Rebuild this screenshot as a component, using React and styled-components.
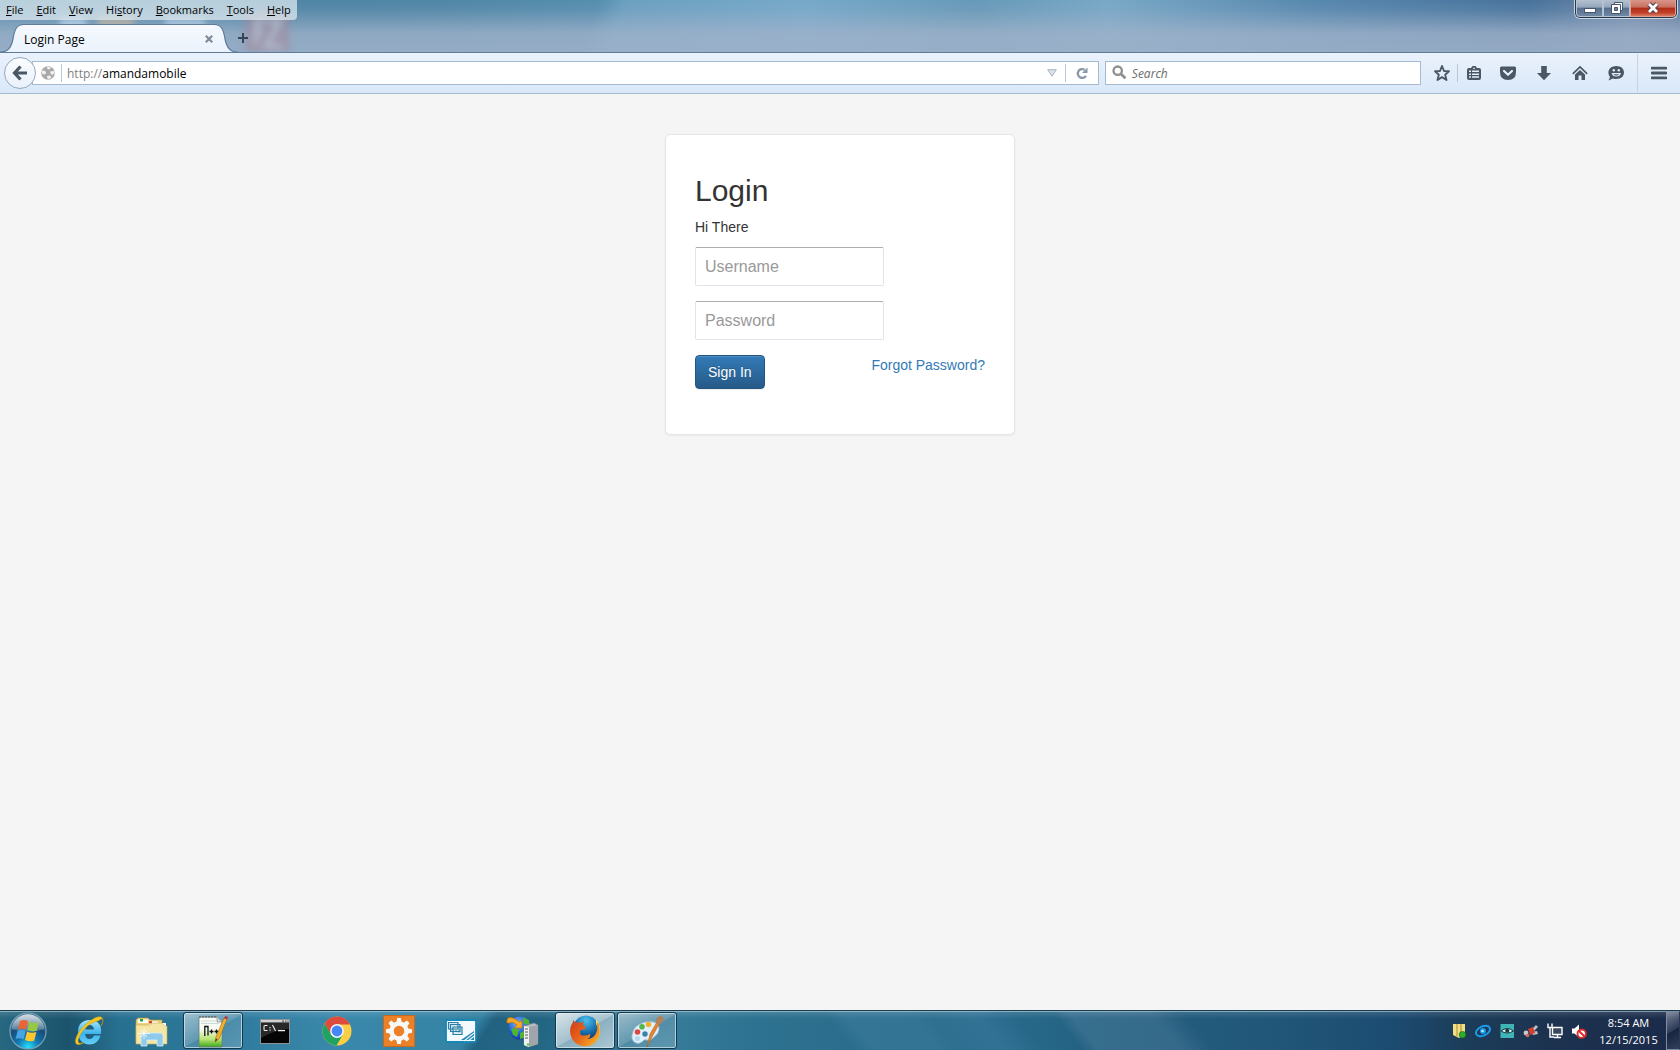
import React from "react";
import styled, { createGlobalStyle } from "styled-components";

const UI_FONT = `"Segoe UI", "Open Sans", "Noto Sans", sans-serif`;
const PAGE_FONT = `"Liberation Sans", Arial, sans-serif`;

const GlobalStyle = createGlobalStyle`
  *, *::before, *::after { box-sizing: border-box; }
  body { margin: 0; }
  button, input { font: inherit; color: inherit; margin: 0; }
  button { padding: 0; border: 0; background: none; cursor: pointer; }
  svg { display: block; flex: none; }
`;

const Desktop = styled.div`
  display: flex;
  flex-direction: column;
  min-height: 100vh;
  font-family: ${UI_FONT};
  font-size: 12px;
  line-height: 16px;
  color: #000;
`;

/* ---------- window frame ---------- */

const Frame = styled.header`
  position: relative;
  display: flex;
  flex-direction: column;
  gap: 4px;
  height: 53px;
  overflow: hidden;
  border-bottom: 1px solid #5d7d9b;
  background:
    linear-gradient(180deg, rgba(160, 178, 202, 0) 0%, rgba(160, 178, 202, 0.15) 20%, rgba(160, 178, 202, 0.8) 65%, rgba(160, 178, 202, 0.85) 100%),
    linear-gradient(108deg, rgba(60, 120, 155, 0.45) 0 570px, rgba(60, 120, 155, 0) 596px),
    linear-gradient(90deg, #6f9db8 0%, #5c8eac 17%, #5e91ae 26%, #6a9fbf 36%, #76a9c9 48%, #6699b8 58%, #78a8c6 66%, #5788ae 78%, #47729b 91%, #7088a8 97%, #5f7a9e 100%);
`;

const GlassGhost = styled.svg`
  position: absolute;
  left: 60px;
  top: 4px;
  filter: blur(3px);
`;

const FrameTop = styled.div`
  position: relative;
  display: flex;
  justify-content: space-between;
  align-items: flex-start;
`;

const MenuBar = styled.nav`
  display: flex;
  gap: 1px;
  height: 20px;
  border-radius: 0 0 4px 0;
  background: rgba(232, 240, 245, 0.68);
  font-size: 11px;
`;

const MenuItem = styled.button`
  padding: 0 6px;
  line-height: 20px;
`;

const Caption = styled.div`
  display: flex;
  height: 19px;
  margin-right: 2px;
  border: 1px solid #c9d5e1;
  border-top: 0;
  border-radius: 0 0 6px 6px;
  background: #26364c;
  padding: 0 1px 1px;
`;

const CaptionButton = styled.button`
  display: flex;
  align-items: center;
  justify-content: center;
  width: ${(p) => (p.$close ? 46 : 27)}px;
  border: 1px solid ${(p) => (p.$close ? "#e0a090" : "#b4c2d2")};
  border-top: 0;
  border-radius: ${(p) => (p.$close ? "0 0 4px 0" : p.$first ? "0 0 0 4px" : "0")};
  background: ${(p) =>
    p.$close
      ? "linear-gradient(#d8968a 0%, #c9705f 45%, #b02c14 50%, #c2402a 80%, #d87a62 100%)"
      : "linear-gradient(#b4c1d1 0%, #95a7bc 45%, #566f8d 50%, #6f87a3 100%)"};
`;

const TabStrip = styled.div`
  position: relative;
  display: flex;
  height: 29px;
`;

const Tab = styled.div`
  display: flex;
  width: 238px;
`;

const TabBody = styled.div`
  display: flex;
  flex: 1;
  align-items: center;
  justify-content: space-between;
  min-width: 0;
  border-top: 1px solid #5d7d9b;
  background: linear-gradient(#f6f9fe, #eaf2fc);
`;

const TabButton = styled.button`
  flex: 1;
  height: 24px;
  padding-top: 2px;
  text-align: left;
`;

const IconButton = styled.button`
  display: flex;
  align-items: center;
  justify-content: center;
  width: ${(p) => p.$w || 36}px;
  height: ${(p) => p.$h || 24}px;
`;

/* ---------- navigation bar ---------- */

const NavBar = styled.div`
  display: flex;
  align-items: center;
  height: 41px;
  padding: 0 0 1px 4px;
  border-bottom: 1px solid #a5b9cf;
  background: linear-gradient(#eaf2fc, #dae8f8);
`;

const BackButton = styled.button`
  position: relative;
  display: flex;
  align-items: center;
  justify-content: center;
  width: 32px;
  height: 32px;
  border: 1px solid #93a9c0;
  border-radius: 50%;
  background: linear-gradient(#fbfdff, #e9f1fb);
`;

const Field = styled.div`
  display: flex;
  align-items: center;
  min-width: 0;
  height: 24px;
  border: 1px solid #a5b9cf;
  background: #fff;
`;

const UrlField = styled(Field)`
  flex: 1070;
  margin-left: -4px;
  padding-left: 8px;
`;

const SearchField = styled(Field)`
  flex: 312;
  margin: 0 6px;
  padding-left: 6px;
  gap: 5px;
`;

const FieldInput = styled.input`
  flex: 1;
  min-width: 0;
  height: 20px;
  padding: 2px 0 0;
  border: 0;
  outline: 0;
  background: none;
  &::placeholder { color: #6b6b6b; font-style: italic; opacity: 1; }
`;

const Scheme = styled.label`
  padding-top: 2px;
  color: #808080;
`;

const Rule = styled.span`
  width: 1px;
  height: ${(p) => p.$h || 18}px;
  margin: ${(p) => p.$m || "0"};
  background: ${(p) => (p.$h ? "#c6d3e2" : "#b9c6d6")};
`;

/* ---------- page ---------- */

const Page = styled.main`
  flex: 1;
  padding: 40px 16px;
  background: #f5f5f5;
  font-family: ${PAGE_FONT};
  font-size: 14px;
  line-height: 20px;
  color: #333;
`;

const LoginCard = styled.form`
  max-width: 350px;
  margin: 0 auto;
  padding: 39px 29px 45px;
  border: 1px solid #e5e5e5;
  border-radius: 5px;
  background: #fff;
  box-shadow: 0 1px 2px rgba(0, 0, 0, 0.05);
`;

const Heading = styled.h2`
  margin: 0 0 10px;
  font-size: 30px;
  line-height: 33px;
  font-weight: 400;
`;

const Greeting = styled.p`
  margin: 0 0 10px;
`;

const TextBox = styled.input`
  display: block;
  width: 189px;
  height: 39px;
  margin-bottom: 15px;
  padding: 7px 9px;
  border: 1px solid #e2e3ea;
  border-top-color: #abadb3;
  border-radius: 2px;
  background: #fff;
  font-size: 16px;
  &::placeholder { color: #999; opacity: 1; }
`;

const Actions = styled.div`
  display: flex;
  align-items: flex-start;
  justify-content: space-between;
`;

const SignIn = styled.button`
  height: 34px;
  padding: 0 12px;
  border: 1px solid #245580;
  border-radius: 4px;
  background: linear-gradient(#337ab7, #265a88);
  box-shadow: inset 0 1px 0 rgba(255, 255, 255, 0.15), 0 1px 1px rgba(0, 0, 0, 0.075);
  color: #fff;
  text-shadow: 0 -1px 0 rgba(0, 0, 0, 0.2);
`;

const Forgot = styled.a`
  color: #337ab7;
  text-decoration: none;
`;

/* ---------- taskbar ---------- */

const Taskbar = styled.footer`
  display: flex;
  align-items: stretch;
  height: 40px;
  border-top: 1px solid #1d3a4a;
  box-shadow: inset 0 1px 0 rgba(190, 220, 235, 0.55);
  background:
    linear-gradient(180deg, rgba(255, 255, 255, 0.14), rgba(255, 255, 255, 0) 20%),
    linear-gradient(50deg, transparent 0 655px, rgba(90, 150, 190, 0.2) 670px 720px, rgba(90, 150, 190, 0.12) 735px, rgba(90, 150, 190, 0.2) 770px, transparent 800px 830px, rgba(110, 150, 180, 0.24) 842px 905px, transparent 930px),
    linear-gradient(125deg, transparent 0 398px, rgba(20, 75, 105, 0.55) 410px, transparent 560px),
    linear-gradient(90deg, #276880 0%, #1b536c 4%, #27708f 7%, #2f7b9d 14%, #3a88ab 20%, #3583a5 27%, #2c7795 32%, #377e9b 39%, #2d7290 45%, #2a6c8b 52%, #27698a 60%, #235d7e 68%, #215879 75%, #1c4b71 83%, #1c3d5a 87%, #1c3350 92%, #1b2a4a 100%);
`;

const StartButton = styled(IconButton)`
  width: 55px;
  height: auto;
  margin-right: 4px;
`;

const Apps = styled.div`
  display: flex;
  flex: 1;
  gap: 2px;
  padding: 1px 0;
`;

const AppButton = styled.button`
  display: flex;
  align-items: center;
  justify-content: center;
  width: 60px;
  border: 1px solid ${(p) => (p.$state ? "#17384a" : "transparent")};
  border-radius: 3px;
  box-shadow: ${(p) => (p.$state ? "inset 0 0 0 1px rgba(225, 240, 248, 0.65)" : "none")};
  background: ${(p) =>
    p.$state === "active"
      ? "linear-gradient(150deg, rgba(255,255,255,.82) 0%, rgba(255,255,255,.58) 50%, rgba(255,255,255,.45) 51%, rgba(255,255,255,.6) 100%)"
      : p.$state === "open"
      ? "linear-gradient(150deg, rgba(255,255,255,.52) 0%, rgba(255,255,255,.25) 50%, rgba(255,255,255,.14) 51%, rgba(255,255,255,.2) 100%)"
      : "none"};
`;

const Tray = styled.div`
  display: flex;
  align-items: center;
`;

const Clock = styled.time`
  display: flex;
  flex-direction: column;
  align-items: center;
  width: 75px;
  font-size: 11px;
  line-height: 17px;
  color: #fff;
`;

const ShowDesktop = styled.button`
  width: 14px;
  border: 1px solid #7c8ca3;
  border-right-color: #2a3850;
  background: linear-gradient(150deg, rgba(255, 255, 255, 0.4), rgba(255, 255, 255, 0.08) 50%, rgba(0, 0, 0, 0.15) 52%, rgba(255, 255, 255, 0.1));
`;

/* ---------- drawings ---------- */

const Svg = ({ s = 16, w, h, v, children, ...rest }) => (
  <svg width={w || s} height={h || s} viewBox={v || `0 0 ${w || s} ${h || s}`} aria-hidden="true" {...rest}>
    {children}
  </svg>
);

const TabEdge = ({ flip }) => (
  <Svg w={24} h={29}>
    <defs>
      <linearGradient id="tabFill" x1="0" y1="0" x2="0" y2="1">
        <stop offset="0" stopColor="#f6f9fe" />
        <stop offset="1" stopColor="#eaf2fc" />
      </linearGradient>
    </defs>
    <g transform={flip ? "translate(24 0) scale(-1 1)" : undefined}>
      <path d="M0 29V28C8 28 11 24 13 15C14.500 5 17 .5 24 .5V29Z" fill="url(#tabFill)" />
      <path d="M0 28C8 28 11 24 13 15C14.500 5 17 .5 24 .5" fill="none" stroke="#5d7d9b" strokeWidth="1.2" />
    </g>
  </Svg>
);

const DARK = "#4a5866";

const Ghost = () => (
  <GlassGhost width="240" height="50" viewBox="0 0 240 50" aria-hidden="true">
    <rect x="-36" y="12" width="26" height="26" fill="#c2d5e4" opacity=".6" />
    <rect x="-4" y="14" width="30" height="26" fill="#c2d9ee" opacity=".7" />
    <rect x="38" y="12" width="36" height="26" fill="#cbb89c" opacity=".6" />
    <rect x="105" y="14" width="40" height="26" fill="#c2d9ee" opacity=".6" />
    <rect x="185" y="8" width="44" height="40" rx="3" fill="#a58598" opacity=".5" />
    <path d="M196 40V18H206M196 28H204M208 18H220L206 42H222" fill="none" stroke="#b4bdce" strokeWidth="5" opacity=".8" />
  </GlassGhost>
);

const BackIcon = () => (
  <Svg s={16}>
    <path d="M8.5 1.5L2.5 8L8.5 14.5M3 8H15" fill="none" stroke={DARK} strokeWidth="3.2" />
  </Svg>
);

const GlobeIcon = () => (
  <Svg s={14}>
    <circle cx="7" cy="7" r="6.8" fill="#a9a9a9" />
    <path d="M6 .8L10 1.400L9 3L7.600 3.600L6.400 3ZM.8 5L3.200 4.600L5 6L4.600 8L3 8.600L1.400 8ZM9 5.400L12.800 5L13.400 7L11.600 9L10 8ZM6 10L9 9.600L10.400 11.400L8 13L6.400 12.400Z" fill="#fff" opacity=".85" />
  </Svg>
);

const StarIcon = () => (
  <Svg s={18}>
    <path d="M9 2L11 7L16 7.3L12.2 10.7L13.5 16L9 13.1L4.5 16L5.8 10.7L2 7.3L7 7Z" fill="none" stroke={DARK} strokeWidth="1.9" strokeLinejoin="round" />
  </Svg>
);

const ListIcon = () => (
  <Svg w={16} h={16}>
    <path d="M1 5Q1 3 3 3H5L6.500 1H9.500L11 3H13Q15 3 15 5V13Q15 15 13 15H3Q1 15 1 13Z" fill={DARK} />
    <path d="M3 5.500H5V7H3ZM6 5.500H13V7H6ZM3 8.400H5V9.900H3ZM6 8.400H13V9.900H6ZM3 11.300H5V12.800H3ZM6 11.300H13V12.800H6Z" fill="#e4eefa" />
    <path d="M7 3.300H9" stroke="#e4eefa" />
  </Svg>
);

const PocketIcon = () => (
  <Svg w={18} h={16}>
    <path d="M1 3Q1 1.5 2.5 1.5H15.5Q17 1.5 17 3V7Q17 15 9 15Q1 15 1 7Z" fill={DARK} />
    <path d="M5 6L9 9.8L13 6" fill="none" stroke="#e8f1fb" strokeWidth="2.2" strokeLinecap="round" strokeLinejoin="round" />
  </Svg>
);

const DownIcon = () => (
  <Svg s={16}>
    <path d="M5.2 1H10.8V8H15L8 15.2L1 8H5.2Z" fill={DARK} />
  </Svg>
);

const HomeIcon = () => (
  <Svg s={16}>
    <path d="M.8 8.8L8 2L15.2 8.8" fill="none" stroke={DARK} strokeWidth="1.7" />
    <path d="M3 9.500L8 5L13 9.500V15H9.5V10.5H6.5V15H3Z" fill={DARK} />
  </Svg>
);

const ChatIcon = () => (
  <Svg w={18} h={16}>
    <path d="M9.3 1C14 1 17 3.8 17 7.5S14 14 9.3 14C8 14 7 13.8 6 13.4L1.5 15.4L3 12C2 10.8 1.4 9.4 1.4 7.5C1.4 3.8 4.8 1 9.3 1Z" fill={DARK} />
    <circle cx="6.8" cy="5.2" r="1.2" fill="#e3edf9" />
    <circle cx="11.8" cy="5.2" r="1.2" fill="#e3edf9" />
    <path d="M4.600 8H14Q13.200 11.600 9.3 11.600Q5.400 11.600 4.600 8Z" fill="#e3edf9" />
    <path d="M6.500 9.200H12Q11.500 10.400 9.300 10.400Q7.200 10.400 6.500 9.200Z" fill={DARK} />
  </Svg>
);

const MenuIcon = () => (
  <Svg w={16} h={16}>
    <path d="M1 3.2H15M1 8H15M1 12.8H15" stroke={DARK} strokeWidth="2.8" strokeLinecap="round" />
  </Svg>
);

const ReloadIcon = () => (
  <Svg s={14}>
    <path d="M11 9.800A4.400 4.400 0 1 1 9.600 3.800" fill="none" stroke="#8a99a8" strokeWidth="2.3" />
    <path d="M12.500 1.500V7H7Z" fill="#8a99a8" />
  </Svg>
);

const SearchIcon = () => (
  <Svg s={15}>
    <circle cx="5.7" cy="5.7" r="4.2" fill="none" stroke="#8f8f8f" strokeWidth="2.3" />
    <path d="M9 9L13.4 13.2" stroke="#8f8f8f" strokeWidth="2.8" />
  </Svg>
);

const StartOrb = () => (
  <Svg s={38}>
    <defs>
      <radialGradient id="orb" cx=".5" cy=".95" r=".85">
        <stop offset="0" stopColor="#27e0fb" />
        <stop offset=".35" stopColor="#1179b3" />
        <stop offset=".7" stopColor="#174d79" />
        <stop offset="1" stopColor="#4c7592" />
      </radialGradient>
      <linearGradient id="orbShine" x1="0" y1="0" x2="0" y2="1">
        <stop offset="0" stopColor="#fff" stopOpacity=".75" />
        <stop offset="1" stopColor="#fff" stopOpacity=".2" />
      </linearGradient>
    </defs>
    <circle cx="19" cy="19" r="18" fill="url(#orb)" stroke="#7ba3b8" strokeWidth="1.2" />
    <path d="M2.5 17A16.6 16.6 0 0 1 35.5 17Q19 22 2.5 17Z" fill="url(#orbShine)" />
    <path d="M11 9Q15 6.8 19 9L17 17.5Q13 15.5 9 17.3Z" fill="#ec6434" />
    <path d="M20.3 9.6Q25 12 30 10L27.8 18.7Q23 20.4 18.3 18Z" fill="#95c847" />
    <path d="M8.6 18.7Q12.5 17 16.6 19L14.6 27.3Q10.6 25.2 6.6 27Z" fill="#48a4e2" />
    <path d="M18 19.6Q22.8 21.8 27.4 20L25.3 28.4Q21 30.4 16 28Z" fill="#fbc72f" />
  </Svg>
);

const IeIcon = () => (
  <Svg s={32}>
    <defs>
      <linearGradient id="ie" x1="0" y1="0" x2="0" y2="1">
        <stop offset="0" stopColor="#a6e6fd" />
        <stop offset=".55" stopColor="#3fb2ec" />
        <stop offset="1" stopColor="#65d0f8" />
      </linearGradient>
    </defs>
    <path d="M27.500 20.500H21Q19.500 24 16.500 24Q12.500 24 12.200 19H28Q29.500 5 16.500 5Q5 5.500 5 17Q5.500 29 16.500 29.500Q25 29.500 27.500 20.500ZM12.300 14.500Q12.800 10 16.600 10Q20.500 10 21 14.500Z" fill="url(#ie)" fillRule="evenodd" />
    <path d="M25 6C31 1 31 6 28 11C33 3 28 -1 20 4C11 9 4 18 2.500 25C1.800 30 5.500 31 11 27.500C4 30 4 26 7 20C11 13 18 7 25 6Z" fill="#f6c824" stroke="#c89912" strokeWidth=".5" />
  </Svg>
);

const ExplorerIcon = () => (
  <Svg w={34} h={32}>
    <path d="M2 5L4 3H14L16 5H28V27H2Z" fill="#ecd27c" stroke="#bb9b48" strokeWidth=".6" />
    <path d="M4 4.5H14V8H4ZM15 6.5H24V10H15ZM23 8H32V12H23Z" fill="#fff" />
    <path d="M6 4H9V6.5H6Z" fill="#22a54a" /><path d="M15 6H18V8.5H15Z" fill="#d24829" /><path d="M23 8H26V10.5H23Z" fill="#2597df" />
    <path d="M2 10H16L19 8H28L31 11H33V29H2Z" fill="#f5e6a5" stroke="#c9ac5b" strokeWidth=".6" />
    <path d="M7 31V21Q7 18 10 18H26Q29 18 29 21V31H23V25H13V31Z" fill="#8ecbea" stroke="#d4effb" strokeWidth=".8" />
    <path d="M10 13V24M4 18.5H16M7 15L13 22M13 15L7 22" stroke="#fff" strokeWidth=".8" />
  </Svg>
);

const NotepadIcon = () => (
  <Svg w={34} h={34}>
    <defs><linearGradient id="npp" x1="0" y1="0" x2="0" y2="1"><stop offset=".4" stopColor="#f7fbf4" /><stop offset=".75" stopColor="#b6e36e" /><stop offset="1" stopColor="#39a81c" /></linearGradient></defs>
    <path d="M3 3H21L26 8V33H3Z" fill="url(#npp)" stroke="#707a80" strokeWidth=".8" />
    <path d="M21 3V8H26" fill="#d5d9dc" stroke="#707a80" strokeWidth=".6" />
    <path d="M4 2V4M7 2V4M10 2V4M13 2V4M16 2V4M19 2V4" stroke="#555" />
    <path d="M5 7H20M5 9.500H23" stroke="#bcc8ce" strokeWidth=".7" />
    <path d="M8.800 22V12.500H12V21.500M13.500 17.500H17.500M15.500 15.500V19.500M18.500 17.500H22.500M20.500 15.500V19.500" stroke="#111" strokeWidth="1.300" fill="none" />
    <path d="M19 28L20 23L28 4L31 5L23 25Z" fill="#f3b32b" stroke="#95651b" strokeWidth=".6" />
    <path d="M28 4L29 2.5Q31 1.5 32 3.5L31 5.5Z" fill="#b3374a" /><path d="M19 28L20 24.5L21.5 25.5Z" fill="#333" />
  </Svg>
);

const CmdIcon = () => (
  <Svg w={30} h={26}>
    <rect x=".5" y="1.5" width="29" height="24" fill="#050505" stroke="#8d9498" />
    <path d="M1 2H29V4.5H1Z" fill="#cfd3d6" /><path d="M22 3.2H24M25 3.2H26.5M27.4 3.2H28.5" stroke="#444" />
    <path d="M1 5H29V11Q14 12 1 20Z" fill="#fff" opacity=".14" />
    <path d="M7.5 7.5H5Q4 7.5 4 8.6V11.4Q4 12.5 5 12.5H7.5M10 9V10.2M10 11.6V12.8M12.5 7L15.5 13M18 12.6H25" stroke="#f1f1f1" strokeWidth="1.1" fill="none" />
  </Svg>
);

const ChromeIcon = () => (
  <Svg s={30}>
    <circle cx="15" cy="15" r="14.5" fill="#fbce43" />
    <path d="M15 8.5H28A14.5 14.5 0 0 0 2.5 7.7L9 19Z" fill="#dd4b3e" />
    <path d="M14.5 29.5L21.2 18L19 15L15 20L10 19L9.2 18.6L2.5 7.7A14.5 14.5 0 0 0 14.5 29.5Z" fill="#1ea362" />
    <circle cx="15" cy="15" r="6.9" fill="#f4f6fa" /><circle cx="15" cy="15" r="5.4" fill="#4486f5" />
  </Svg>
);

const GearIcon = () => (
  <Svg s={32}>
    <rect width="32" height="32" fill="#ec8026" /><rect x=".5" y=".5" width="31" height="31" fill="none" stroke="#c56a23" />
    <g fill="#f8f8f8">
      {[0, 45, 90, 135, 180, 225, 270, 315].map((a) => (
        <path key={a} d="M13 9L14.200 3H17.800L19 9Z" transform={`rotate(${a} 16 16)`} />
      ))}
    </g>
    <circle cx="16" cy="16" r="7.500" fill="none" stroke="#f8f8f8" strokeWidth="4.400" />
  </Svg>
);

const RemoteIcon = () => (
  <Svg w={32} h={26}>
    <rect x="1" y="2" width="30" height="22" rx="1.5" fill="#f3f9fc" stroke="#1487b5" strokeWidth="1.8" />
    <path d="M3.500 4.500H13V11H3.500ZM5.500 6.500H15V13.500H5.500ZM8 9H17V16.500H8Z" fill="#dcebf3" stroke="#2a7fa6" strokeWidth="1.200" />
    <path d="M10 13H12M14 11.500V14.500" stroke="#2a7fa6" />
    <path d="M16 22L29 13V22Z" fill="#1e86b4" /><path d="M19 23L29 15M23 23L30 17.500" stroke="#f3f9fc" strokeWidth="1.100" />
  </Svg>
);

const ServerIcon = () => (
  <Svg w={34} h={34}>
    <defs><radialGradient id="earth" cx=".4" cy=".3" r=".8"><stop offset="0" stopColor="#77b8ff" /><stop offset=".6" stopColor="#1f55d0" /><stop offset="1" stopColor="#102c91" /></radialGradient></defs>
    <circle cx="14" cy="14" r="11.500" fill="url(#earth)" />
    <path d="M5 15Q9 13 13 16L11 23L7 21ZM17 3L23 6L24 11L18 10ZM14 19L18 17V24L14 25Z" fill="#4fb52e" />
    <path d="M1 9Q0 2 7 4L14 8L16 6V14H8L11 11Q6 7 4 9Z" fill="#f5a929" stroke="#bd7109" strokeWidth=".7" />
    <path d="M18 12L28 9L32 11V30L22 33L18 31Z" fill="#b9bec2" stroke="#777d83" strokeWidth=".6" />
    <path d="M18 12L23 13V33L18 31Z" fill="#eff1f2" /><path d="M23 13L32 11V30L23 33Z" fill="#9fa5aa" />
    <path d="M19 15H22M19 18H22M19 21H22M19 24H22" stroke="#555" /><circle cx="22" cy="30.500" r="1.200" fill="#53d22a" />
  </Svg>
);

const FirefoxIcon = () => (
  <Svg s={32}>
    <defs><radialGradient id="ffGlobe" cx=".5" cy=".2" r=".8"><stop offset="0" stopColor="#4ac2ee" /><stop offset=".6" stopColor="#176dac" /><stop offset="1" stopColor="#11325f" /></radialGradient>
    <linearGradient id="fox" x1="0" y1="0" x2="1" y2=".7"><stop offset="0" stopColor="#cf3d15" /><stop offset=".5" stopColor="#e8621d" /><stop offset="1" stopColor="#f7a923" /></linearGradient></defs>
    <circle cx="17" cy="13" r="12.500" fill="url(#ffGlobe)" />
    <path d="M27 5C33 11 32 21 26 27C30 19 30 13 27 9Z" fill="#fff05c" />
    <path d="M29.500 9C32 16 31 23 26 27.500C21 32.500 11 32.500 5.500 27C0 21 0 13 3.500 8L4.500 5L6.500 8Q9 6.500 12 8L14.500 5.500L14 10L17 12.500Q16 14.500 12 15Q10 17 12 20Q17 21.500 21 19Q22 22.500 18 24Q25 24 27.500 17Q29 13 27.500 7Z" fill="url(#fox)" />
  </Svg>
);

const PaintIcon = () => (
  <Svg w={34} h={34}>
    <path d="M2 21Q3 11 15 8Q27 6 29 13Q30 19 23 24Q21 27 17 26Q14 25 12 28Q8 31 4 28Q1 25 2 21Z" fill="#e1f0fa" stroke="#88b4cf" strokeWidth=".8" />
    <circle cx="15" cy="20" r="2.700" fill="#3681a7" />
    <circle cx="7.500" cy="18" r="2.800" fill="#db4a40" /><circle cx="12" cy="12.800" r="2.800" fill="#55b44a" /><circle cx="18.500" cy="10.500" r="2.800" fill="#f2b230" /><circle cx="7.500" cy="24.500" r="2.600" fill="#b8d8ee" />
    <path d="M17 33L20 20L27 8L29.500 9.500L22.500 22Z" fill="#e9842d" stroke="#a5581c" strokeWidth=".5" />
    <path d="M26 9Q25 4 30 1.500L34 4Q34 8 29.500 10.500Z" fill="#ae8260" />
  </Svg>
);

const TRAY_ICONS = [
  ["Updates", <g key="a"><path d="M2 1H14V12L8 15L2 12Z" fill="#f2dd83" /><path d="M6 1V13M10 1V13" stroke="#a98b35" /><circle cx="11.500" cy="11.700" r="3.300" fill="#2cad2d" stroke="#0d6714" strokeWidth=".6" /></g>],
  ["Network agent", <g key="b"><ellipse cx="8" cy="8" rx="7.400" ry="4.600" transform="rotate(-25 8 8)" fill="none" stroke="#1a9be8" strokeWidth="2" /><circle cx="8" cy="8" r="3" fill="#1a9be8" /><circle cx="7.500" cy="8" r="1.300" fill="#bcecff" /></g>],
  ["Monitor", <g key="c"><rect x="1.500" y="1" width="13.500" height="14" fill="#3fb4b4" /><path d="M2 8Q8 3 14.500 8Q8 12 2 8Z" fill="#d5eeee" stroke="#173a42" /><circle cx="8.200" cy="7.800" r="2" fill="#173a42" /></g>],
  ["Satellite", <g key="d"><path d="M9 6L13 2L15 4L11 8ZM8 9L14 8L15 11L10 12Z" fill="#b9bfc6" /><path d="M5 6L10 4L12 10L7 12Z" fill="#d63d2f" /><circle cx="3" cy="10" r="2.400" fill="#c4c9cf" /><circle cx="4.500" cy="12.500" r="1.800" fill="#d66a60" /></g>],
  ["Network", <g key="e"><path d="M5.500 4.500H15V11.500H5.500ZM10.500 12V14M7 14.500H14" stroke="#fff" strokeWidth="1.400" fill="#39475c" /><path d="M1 .5V4.500H5V.5M3 4V14H7" stroke="#fff" strokeWidth="1.400" fill="none" /></g>],
  ["Volume muted", <g key="f"><path d="M1 5.500H3.500L8 1.500V14.500L3.500 10.500H1Z" fill="#fff" /><circle cx="10.700" cy="10.700" r="4.200" fill="#fff" stroke="#dc2b28" strokeWidth="1.900" /><path d="M8 8L13.500 13.500" stroke="#dc2b28" strokeWidth="1.900" /></g>],
];

const MENUS = [["", "F", "ile"], ["", "E", "dit"], ["", "V", "iew"], ["Hi", "s", "tory"], ["", "B", "ookmarks"], ["", "T", "ools"], ["", "H", "elp"]];

const APPS = [
  ["Internet Explorer", IeIcon],
  ["Windows Explorer", ExplorerIcon],
  ["Notepad++", NotepadIcon, "open"],
  ["Command Prompt", CmdIcon],
  ["Chrome", ChromeIcon],
  ["Settings", GearIcon],
  ["Remote Desktop", RemoteIcon],
  ["Server Manager", ServerIcon],
  ["Firefox", FirefoxIcon, "active"],
  ["Paint", PaintIcon, "open"],
];

export default function App() {
  return (
    <Desktop>
      <GlobalStyle />
      <Frame>
        <Ghost />
        <FrameTop>
          <MenuBar>
            {MENUS.map(([a, k, b]) => (
              <MenuItem key={k + b}>{a}<u>{k}</u>{b}</MenuItem>
            ))}
          </MenuBar>
          <Caption>
            <CaptionButton $first aria-label="Minimize">
              <Svg w={12} h={14}><rect x=".5" y="7.500" width="11" height="4" fill="#fff" stroke="#46566c" /></Svg>
            </CaptionButton>
            <CaptionButton aria-label="Restore">
              <Svg w={14} h={14}><path d="M4.500 1.500H12.500V9.500H4.500Z" fill="#fff" stroke="#46566c" /><path d="M1.500 3.500H10.500V12.500H1.500Z" fill="#fff" stroke="#46566c" /><path d="M4.500 6.500H7.500V9.500H4.500Z" fill="#7087a3" stroke="#46566c" /></Svg>
            </CaptionButton>
            <CaptionButton $close aria-label="Close window">
              <Svg w={14} h={14}><path d="M3 3L11 11M11 3L3 11" stroke="#5a3f49" strokeWidth="5" /><path d="M3 3L11 11M11 3L3 11" stroke="#fff" strokeWidth="2.800" /></Svg>
            </CaptionButton>
          </Caption>
        </FrameTop>
        <TabStrip>
          <Tab>
            <TabEdge />
            <TabBody>
              <TabButton>Login Page</TabButton>
              <IconButton $w={10} aria-label="Close tab">
                <Svg s={8}><path d="M.8 .8L7.200 7.200M7.200 .8L.8 7.200" stroke="#7f8b98" strokeWidth="2.200" /></Svg>
              </IconButton>
            </TabBody>
            <TabEdge flip />
          </Tab>
          <IconButton $w={10} $h={28} aria-label="New tab">
            <Svg s={10}><path d="M5 0V10M0 5H10" stroke="#34475a" strokeWidth="2" /></Svg>
          </IconButton>
        </TabStrip>
      </Frame>

      <NavBar>
        <BackButton aria-label="Back"><BackIcon /></BackButton>
        <UrlField>
          <GlobeIcon />
          <Rule $m="0 5px 0 6px" />
          <Scheme htmlFor="address">http://</Scheme>
          <FieldInput id="address" defaultValue="amandamobile" />
          <IconButton $w={26} $h={20} aria-label="Show history">
            <Svg w={10} h={8}><path d="M.7 .7H9.300L5 7.200Z" fill="#dde3ec" stroke="#aab2bf" /></Svg>
          </IconButton>
          <Rule />
          <IconButton $w={32} $h={20} aria-label="Reload"><ReloadIcon /></IconButton>
        </UrlField>
        <SearchField>
          <SearchIcon />
          <FieldInput placeholder="Search" aria-label="Search" />
        </SearchField>
        <IconButton $w={30} aria-label="Bookmark this page"><StarIcon /></IconButton>
        <Rule />
        <IconButton $w={32} aria-label="Show bookmarks"><ListIcon /></IconButton>
        <IconButton aria-label="Save to Pocket"><PocketIcon /></IconButton>
        <IconButton aria-label="Downloads"><DownIcon /></IconButton>
        <IconButton aria-label="Home"><HomeIcon /></IconButton>
        <IconButton aria-label="Chat"><ChatIcon /></IconButton>
        <Rule $h={38} $m="0 0 0 3px" />
        <IconButton $w={42} aria-label="Open menu"><MenuIcon /></IconButton>
      </NavBar>

      <Page>
        <LoginCard onSubmit={(e) => e.preventDefault()}>
          <Heading>Login</Heading>
          <Greeting>Hi There</Greeting>
          <TextBox type="text" placeholder="Username" aria-label="Username" />
          <TextBox type="password" placeholder="Password" aria-label="Password" />
          <Actions>
            <SignIn type="submit">Sign In</SignIn>
            <Forgot href="#forgot">Forgot Password?</Forgot>
          </Actions>
        </LoginCard>
      </Page>

      <Taskbar>
        <StartButton aria-label="Start"><StartOrb /></StartButton>
        <Apps>
          {APPS.map(([name, Icon, state]) => (
            <AppButton key={name} $state={state} aria-label={name}><Icon /></AppButton>
          ))}
        </Apps>
        <Tray>
          {TRAY_ICONS.map(([name, art]) => (
            <IconButton key={name} $w={24} aria-label={name}><Svg s={16}>{art}</Svg></IconButton>
          ))}
          <Clock dateTime="2015-12-15T08:54"><span>8:54 AM</span><span>12/15/2015</span></Clock>
        </Tray>
        <ShowDesktop aria-label="Show desktop" />
      </Taskbar>
    </Desktop>
  );
}
